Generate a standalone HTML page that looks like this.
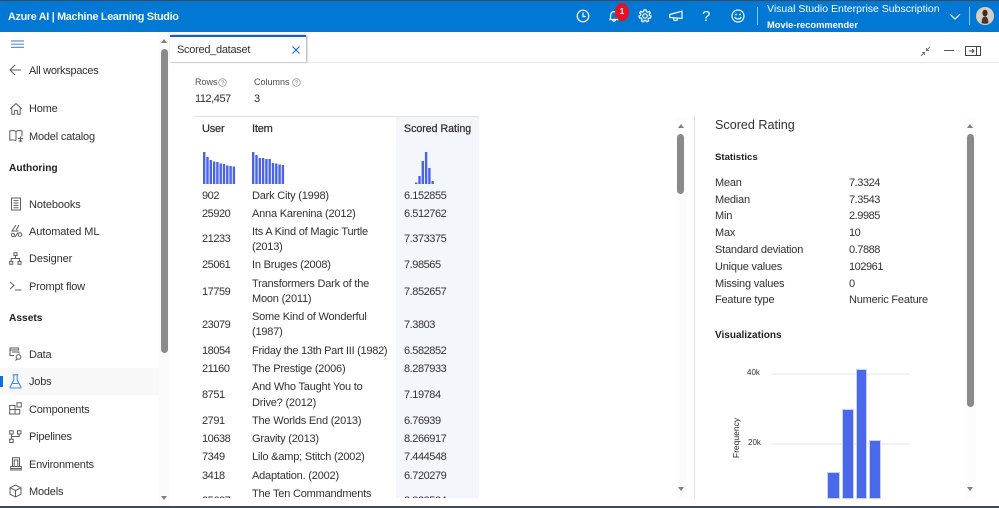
<!DOCTYPE html>
<html><head><meta charset="utf-8">
<style>
html,body{margin:0;padding:0;background:#fff}
body{width:999px;height:508px;position:relative;overflow:hidden;font-family:"Liberation Sans",sans-serif;font-size:11px;color:#3b3a39}
.a{position:absolute}
.t{position:absolute;white-space:nowrap;line-height:16px;height:16px}
.n{font-size:11px;letter-spacing:-.2px;color:#323130;margin-top:1px}
.d{letter-spacing:-.45px}
.z{margin-top:0}
.b{font-weight:bold;color:#201f1e}
svg{position:absolute;overflow:visible}
.s{fill:none;stroke:#5f5e5c;stroke-width:1}
.w{fill:none;stroke:#fff;stroke-width:1.2}
</style></head><body>
<div class="a" style="left:0;top:0;width:999px;height:2px;background:#3b4a5c"></div>
<div class="a" style="left:0;top:1px;width:999px;height:31px;background:#0078d4"></div>
<div class="t" style="left:8px;top:9px;color:#fff;font-size:10.8px;font-weight:bold;opacity:.96;letter-spacing:-.3px">Azure AI | Machine Learning Studio</div>

<svg style="left:576px;top:9px" width="14" height="14" viewBox="0 0 14 14"><circle class="w" cx="7" cy="7" r="5.8"/><path class="w" d="M7 3.5V7.5H10"/></svg>
<svg style="left:607px;top:9px" width="14" height="14" viewBox="0 0 14 14"><path class="w" d="M3 10.5C3.8 9 3.5 7.5 3.7 5.8 4 3.8 5.3 2.6 7 2.6S10 3.8 10.3 5.8C10.5 7.5 10.2 9 11 10.5ZM5.5 10.8C5.7 12.6 8.3 12.6 8.5 10.8"/></svg>
<div class="a" style="left:615px;top:3px;width:14px;height:18px;border-radius:7px/9px;background:#e81123;color:#fff;font-size:8px;font-weight:bold;text-align:center;line-height:18px">1</div>
<svg style="left:638px;top:9px" width="14" height="14" viewBox="0 0 14 14"><circle class="w" cx="7" cy="7" r="2.2"/><path class="w" d="M6 .9H8L8.4 2.6 9.8 3.2 11.3 2.3 12.4 3.9 11.2 5.1 11.4 6.4 13 7 12.6 9 10.9 9 10 10.2 10.6 11.8 8.8 12.8 7.7 11.5H6.3L5.2 12.8 3.4 11.8 4 10.2 3.1 9 1.4 9 1 7 2.6 6.4 2.8 5.1 1.6 3.9 2.7 2.3 4.2 3.2 5.6 2.6Z"/></svg>
<svg style="left:669px;top:10px" width="14" height="12" viewBox="0 0 14 12"><path class="w" d="M.8 4.5 13 1.2V8.5L.8 7.5ZM4.5 8 5 10.3 8 10.5 8.3 8.3"/></svg>
<div class="t" style="left:702px;top:9px;color:#fff;font-size:15px">?</div>
<svg style="left:731px;top:9px" width="14" height="14" viewBox="0 0 14 14"><circle class="w" cx="7" cy="7" r="6"/><circle cx="5" cy="5.5" r=".9" fill="#fff"/><circle cx="9" cy="5.5" r=".9" fill="#fff"/><path class="w" d="M3.8 8C4.8 10.6 9.2 10.6 10.2 8"/></svg>
<div class="a" style="left:757px;top:7px;width:1px;height:18px;background:#8cc4ec"></div>
<div class="t" style="left:767px;top:1px;color:#fff;font-size:10.5px;letter-spacing:0">Visual Studio Enterprise Subscription</div>
<div class="t" style="left:767px;top:17px;color:#fff;font-size:9.3px;font-weight:bold">Movie-recommender</div>
<svg style="left:949px;top:13px" width="12" height="8" viewBox="0 0 12 8"><path class="w" d="M1 1.2 6 6 11 1.2"/></svg>
<div class="a" style="left:969px;top:7px;width:1px;height:18px;background:#8cc4ec"></div>
<svg style="left:976px;top:7px" width="18" height="18" viewBox="0 0 18 18"><circle cx="9" cy="9" r="9" fill="#d6cfc6"/><ellipse cx="9" cy="6" rx="2.6" ry="3.3" fill="#3c2a22"/><path d="M5.6 16C5.8 11 7 9.5 9 9.5S12.2 11 12.4 16Q9 17.6 5.6 16Z" fill="#4a342a"/></svg>

<!-- sidebar -->
<svg style="left:11px;top:40px" width="13" height="9"><path d="M0 1H13M0 4.2H13M0 7.4H13" stroke="#5b93dc" stroke-width="1.2" fill="none"/></svg>
<svg style="left:9px;top:64px" width="13" height="12" viewBox="0 0 13 12"><path class="s" d="M12 6H1M6 1 1 6 6 11"/></svg>
<div class="t n" style="left:29px;top:62px;letter-spacing:-.28px">All workspaces</div>

<svg style="left:9px;top:102px" width="14" height="14" viewBox="0 0 14 14"><path class="s" d="M1.2 6.8 7 1.6 12.8 6.8M2.8 5.6V12.3H5.6V8.4H8.4V12.3H11.2V5.6"/></svg>
<div class="t n z" style="left:29px;top:101px">Home</div>
<svg style="left:9px;top:129px" width="15" height="14" viewBox="0 0 15 14"><path class="s" d="M7 2.5C5.5 1.4 3 1.4 .8 2V11.2C3 10.6 5 10.8 7 11.6M7 2.5C8.5 1.4 11 1.4 13 2V7.5M7 2.5V11.6"/><path d="M9 9.5H14M11.5 7.5V13M9.5 12H13.5" stroke="#5f5e5c" stroke-width="1.1" fill="none"/></svg>
<div class="t n" style="left:29px;top:128px">Model catalog</div>
<div class="t b" style="left:9px;top:161px;font-size:10.2px">Authoring</div>

<svg style="left:10px;top:197px" width="12" height="14" viewBox="0 0 12 14"><path class="s" d="M1.5 1H10.5V13H1.5ZM3.5 3.6H8.5M3.5 6H8.5M3.5 8.4H8.5M3.5 10.8H8.5"/></svg>
<div class="t n" style="left:29px;top:196px;letter-spacing:-.1px">Notebooks</div>
<svg style="left:10px;top:224px" width="13" height="14" viewBox="0 0 13 14"><path class="s" d="M6 1 2 7H8.5M9 1 6.2 6"/><circle class="s" cx="3" cy="11" r="1.6"/><circle class="s" cx="10" cy="10.6" r="1.8"/><path class="s" d="M5 13 8 8.5"/></svg>
<div class="t n" style="left:29px;top:223px;letter-spacing:-.1px">Automated ML</div>
<svg style="left:9px;top:252px" width="13" height="13" viewBox="0 0 13 13"><path class="s" d="M5 .7H8V3.5H5ZM.7 9.5H3.7V12.3H.7ZM9 9.5H12V12.3H9ZM6.5 3.5V6.5M2.2 9.5V6.5H10.5V9.5"/></svg>
<div class="t n z" style="left:29px;top:251px;letter-spacing:-.1px">Designer</div>
<svg style="left:9px;top:281px" width="13" height="10" viewBox="0 0 13 10"><path class="s" d="M1 1 5 4.5 1 8M6 9H12.5"/></svg>
<div class="t n" style="left:29px;top:278px">Prompt flow</div>
<div class="t b" style="left:9px;top:310px;font-size:10.2px;margin-top:1px">Assets</div>

<svg style="left:9px;top:347px" width="14" height="14" viewBox="0 0 14 14"><path class="s" d="M1 1H9.5V3H1ZM1 3V8.5H5M3 5H10V6.5"/><circle class="s" cx="9.5" cy="10" r="2.3"/><path class="s" d="M8 12 6.5 13.5"/></svg>
<div class="t n" style="left:29px;top:346px">Data</div>
<div class="a" style="left:0;top:368px;width:159px;height:27px;background:#f8f8f8"></div>
<div class="a" style="left:0;top:376px;width:3px;height:11px;background:#0f6cdd"></div>
<svg style="left:9px;top:374px" width="13" height="15" viewBox="0 0 13 15"><path d="M3.5 .8H9.5M4.8 1V6L1 13.2Q.8 14 1.6 14H11.4Q12.2 14 12 13.2L8.2 6V1M3 9.5H10" fill="none" stroke="#3f8fd8" stroke-width="1.1"/></svg>
<div class="t n" style="left:29px;top:373px">Jobs</div>
<svg style="left:9px;top:402px" width="13" height="13" viewBox="0 0 13 13"><path class="s" d="M.7 3.5H6V12H.7ZM.7 7.5H10.7V12H6M8 .7H12.3V5H8Z"/></svg>
<div class="t n" style="left:29px;top:401px">Components</div>
<svg style="left:9px;top:430px" width="13" height="13" viewBox="0 0 13 13"><path class="s" d="M.7 .7H4.2V4H.7ZM8.5 .7H12V4H8.5ZM.7 9.2H4.2V12.5H.7ZM2.4 4V9.2M10.2 4V6.5H2.4"/></svg>
<div class="t n" style="left:29px;top:428px">Pipelines</div>
<svg style="left:10px;top:457px" width="12" height="14" viewBox="0 0 12 14"><path class="s" d="M2.5 .7H9.5V9.5H2.5ZM4.2 9.5V3H7.8V9.5M.7 13V9.5H11.3V13ZM.7 11.5H11.3"/></svg>
<div class="t n" style="left:29px;top:456px">Environments</div>
<svg style="left:9px;top:484px" width="13" height="14" viewBox="0 0 13 14"><path class="s" d="M6.5 1 12 3.8V10.2L6.5 13 1 10.2V3.8ZM1 3.8 6.5 6.5 12 3.8M6.5 6.5V13"/></svg>
<div class="t n" style="left:29px;top:483px">Models</div>

<!-- sidebar scrollbar -->
<div class="a" style="left:159px;top:32px;width:11px;height:474px;background:#fbfbfb"></div>
<div class="a" style="left:161px;top:39px;width:0;height:0;border:3px solid transparent;border-bottom:4px solid #808080;border-top:0"></div>
<div class="a" style="left:161px;top:49px;width:7px;height:304px;background:#8a8a8a;border-radius:4px"></div>
<div class="a" style="left:161px;top:496px;width:0;height:0;border:3px solid transparent;border-top:4px solid #808080;border-bottom:0"></div>

<!-- tab -->
<div class="a" style="left:170px;top:62px;width:829px;height:1px;background:#e8e8e8"></div>
<div class="a" style="left:170px;top:35px;width:136px;height:27px;background:#fff;border-top:2px solid #0f5fd6;box-sizing:border-box;box-shadow:1px 0 2px rgba(0,0,0,.35)"></div>
<div class="t n z" style="left:177px;top:42px;font-size:11px;letter-spacing:-.28px">Scored_dataset</div>
<svg style="left:292px;top:46px" width="8" height="8"><path d="M.5 .5 7.5 7.5M7.5 .5 .5 7.5" stroke="#0f6cbd" stroke-width="1.1"/></svg>

<svg style="left:920px;top:46px" width="11" height="11" viewBox="0 0 11 11"><path d="M10 1 6.5 4.5M6.5 2V4.5H9M1 10 4.5 6.5M2 6.5H4.5V9" fill="none" stroke="#8a6f60" stroke-width="1"/></svg>
<div class="a" style="left:944px;top:50px;width:10px;height:1px;background:#555"></div>
<svg style="left:965px;top:46px" width="16" height="10" viewBox="0 0 16 10"><path d="M.5 .5H15.5V9.5H.5ZM11.5 .5V9.5" fill="none" stroke="#444" stroke-width="1"/><path d="M4 5H9M7 3 9 5 7 7" fill="none" stroke="#444" stroke-width="1"/></svg>

<!-- stats header -->
<div class="t" style="left:195px;top:74px;font-size:9px;color:#4f4d4b">Rows</div>
<svg style="left:218px;top:78px" width="9" height="9"><circle cx="4.5" cy="4.5" r="3.8" fill="none" stroke="#a19f9d" stroke-width=".9"/><path d="M3.3 3.5C3.5 2.2 5.7 2.4 5.6 3.6 5.5 4.4 4.5 4.4 4.5 5.3M4.5 6.2V6.9" fill="none" stroke="#a19f9d" stroke-width=".8"/></svg>
<div class="t" style="left:254px;top:74px;font-size:9px;color:#4f4d4b">Columns</div>
<svg style="left:292px;top:78px" width="9" height="9"><circle cx="4.5" cy="4.5" r="3.8" fill="none" stroke="#a19f9d" stroke-width=".9"/><path d="M3.3 3.5C3.5 2.2 5.7 2.4 5.6 3.6 5.5 4.4 4.5 4.4 4.5 5.3M4.5 6.2V6.9" fill="none" stroke="#a19f9d" stroke-width=".8"/></svg>
<div class="t n d" style="left:195px;top:90px">112,457</div>
<div class="t n" style="left:254px;top:90px">3</div>

<!-- table -->
<div class="a" style="left:194px;top:116px;width:285px;height:1px;background:#e1e1e1"></div>
<div class="a" style="left:396px;top:117px;width:83px;height:381px;background:#f3f7fc"></div>
<div class="t n" style="left:202px;top:120px;-webkit-text-stroke:.25px #323130">User</div>
<div class="t n" style="left:252px;top:120px;-webkit-text-stroke:.25px #323130">Item</div>
<div class="t n" style="left:404px;top:120px;-webkit-text-stroke:.25px #323130;font-size:10.6px;letter-spacing:0">Scored Rating</div>

<svg style="left:203px;top:152px" width="34" height="32"><g fill="#4a63e8"><rect x="0" y="0" width="2.4" height="32"/><rect x="3.3" y="5" width="2.4" height="27"/><rect x="6.6" y="8" width="2.4" height="24"/><rect x="9.9" y="9.5" width="2.4" height="22.5"/><rect x="13.2" y="10" width="2.4" height="22"/><rect x="16.5" y="11.5" width="2.4" height="20.5"/><rect x="19.8" y="12" width="2.4" height="20"/><rect x="23.1" y="13.5" width="2.4" height="18.5"/><rect x="26.4" y="14" width="2.4" height="18"/><rect x="29.7" y="14.5" width="2.4" height="17.5"/></g></svg>
<svg style="left:252px;top:152px" width="34" height="32"><g fill="#4a63e8"><rect x="0" y="0" width="2.4" height="32"/><rect x="3.3" y="3" width="2.4" height="29"/><rect x="6.6" y="6" width="2.4" height="26"/><rect x="9.9" y="6" width="2.4" height="26"/><rect x="13.2" y="7" width="2.4" height="25"/><rect x="16.5" y="7" width="2.4" height="25"/><rect x="19.8" y="11" width="2.4" height="21"/><rect x="23.1" y="11.5" width="2.4" height="20.5"/><rect x="26.4" y="12.5" width="2.4" height="19.5"/><rect x="29.7" y="13" width="2.4" height="19"/></g></svg>
<svg style="left:414px;top:152px" width="34" height="32"><g fill="#4a63e8"><rect x="1" y="30.5" width="2.4" height="1.5"/><rect x="4.3" y="24" width="2.4" height="8"/><rect x="7.6" y="9" width="2.4" height="23"/><rect x="10.9" y="0" width="2.4" height="32"/><rect x="14.2" y="16" width="2.4" height="16"/><rect x="17.5" y="29" width="2.4" height="3"/></g></svg>

<div class="a" style="left:194px;top:117px;width:290px;height:381px;overflow:hidden" id="r">
<div class="t n d" style="left:8px;top:70px">902</div><div class="t n" style="left:58px;top:70px">Dark City (1998)</div><div class="t n d" style="left:210px;top:70px">6.152855</div>
<div class="t n d" style="left:8px;top:88px">25920</div><div class="t n" style="left:58px;top:88px">Anna Karenina (2012)</div><div class="t n d" style="left:210px;top:88px">6.512762</div>
<div class="t n d" style="left:8px;top:113px">21233</div><div class="t n" style="left:58px;top:106px">Its A Kind of Magic Turtle</div><div class="t n" style="left:58px;top:121px">(2013)</div><div class="t n d" style="left:210px;top:113px">7.373375</div>
<div class="t n d" style="left:8px;top:139px">25061</div><div class="t n" style="left:58px;top:139px">In Bruges (2008)</div><div class="t n d" style="left:210px;top:139px">7.98565</div>
<div class="t n d" style="left:8px;top:166px">17759</div><div class="t n" style="left:58px;top:158px">Transformers Dark of the</div><div class="t n" style="left:58px;top:173px">Moon (2011)</div><div class="t n d" style="left:210px;top:166px">7.852657</div>
<div class="t n d" style="left:8px;top:199px">23079</div><div class="t n" style="left:58px;top:191px">Some Kind of Wonderful</div><div class="t n" style="left:58px;top:206px">(1987)</div><div class="t n d" style="left:210px;top:199px">7.3803</div>
<div class="t n d" style="left:8px;top:225px">18054</div><div class="t n" style="left:58px;top:225px;letter-spacing:-.27px">Friday the 13th Part III (1982)</div><div class="t n d" style="left:210px;top:225px">6.582852</div>
<div class="t n d" style="left:8px;top:243px">21160</div><div class="t n" style="left:58px;top:243px">The Prestige (2006)</div><div class="t n d" style="left:210px;top:243px">8.287933</div>
<div class="t n d" style="left:8px;top:269px">8751</div><div class="t n" style="left:58px;top:261px">And Who Taught You to</div><div class="t n" style="left:58px;top:277px">Drive? (2012)</div><div class="t n d" style="left:210px;top:269px">7.19784</div>
<div class="t n d" style="left:8px;top:295px">2791</div><div class="t n" style="left:58px;top:295px">The Worlds End (2013)</div><div class="t n d" style="left:210px;top:295px">6.76939</div>
<div class="t n d" style="left:8px;top:313px">10638</div><div class="t n" style="left:58px;top:313px">Gravity (2013)</div><div class="t n d" style="left:210px;top:313px">8.266917</div>
<div class="t n d" style="left:8px;top:331px">7349</div><div class="t n" style="left:58px;top:331px">Lilo &amp;amp; Stitch (2002)</div><div class="t n d" style="left:210px;top:331px">7.444548</div>
<div class="t n d" style="left:8px;top:350px">3418</div><div class="t n" style="left:58px;top:350px">Adaptation. (2002)</div><div class="t n d" style="left:210px;top:350px">6.720279</div>
<div class="t n d" style="left:8px;top:375px">25687</div><div class="t n" style="left:58px;top:368px">The Ten Commandments</div><div class="t n d" style="left:210px;top:375px">8.823584</div>
</div>

<!-- middle scrollbar -->
<div class="a" style="left:676px;top:117px;width:11px;height:381px;background:#fcfcfc"></div>
<div class="a" style="left:678px;top:124px;width:0;height:0;border:3px solid transparent;border-bottom:4px solid #808080;border-top:0"></div>
<div class="a" style="left:677px;top:134px;width:7px;height:60px;background:#8a8a8a;border-radius:4px"></div>
<div class="a" style="left:678px;top:487px;width:0;height:0;border:3px solid transparent;border-top:4px solid #808080;border-bottom:0"></div>

<!-- right panel -->
<div class="a" style="left:694px;top:116px;width:1px;height:382px;background:#e1e1e1"></div>
<div class="t" style="left:715px;top:117px;font-size:12.6px;color:#323130">Scored Rating</div>
<div class="t b" style="left:715px;top:149px;font-size:9.6px;margin-top:1px">Statistics</div>
<div class="t n z" style="left:715px;top:175px">Mean</div><div class="t n z d" style="left:849px;top:175px">7.3324</div>
<div class="t n z" style="left:715px;top:192px">Median</div><div class="t n z d" style="left:849px;top:192px">7.3543</div>
<div class="t n z" style="left:715px;top:208px">Min</div><div class="t n z d" style="left:849px;top:208px">2.9985</div>
<div class="t n z" style="left:715px;top:225px">Max</div><div class="t n z d" style="left:849px;top:225px">10</div>
<div class="t n z" style="left:715px;top:242px">Standard deviation</div><div class="t n z d" style="left:849px;top:242px">0.7888</div>
<div class="t n z" style="left:715px;top:259px">Unique values</div><div class="t n z d" style="left:849px;top:259px">102961</div>
<div class="t n z" style="left:715px;top:276px">Missing values</div><div class="t n z" style="left:849px;top:276px">0</div>
<div class="t n z" style="left:715px;top:292px">Feature type</div><div class="t n z" style="left:849px;top:292px">Numeric Feature</div>
<div class="t b" style="left:715px;top:327px;font-size:10px;margin-top:1px">Visualizations</div>

<!-- chart -->
<div class="a" style="left:771px;top:373px;width:139px;height:2px;background:#f3f2f1"></div>
<div class="a" style="left:771px;top:443px;width:139px;height:2px;background:#f3f2f1"></div>
<div class="t" style="left:747px;top:365px;font-size:8px;color:#323130">40k</div>
<div class="t" style="left:748px;top:435px;font-size:8px;color:#323130">20k</div>
<div class="t" style="left:712px;top:430px;width:48px;text-align:center;font-size:8.5px;color:#201f1e;transform:rotate(-90deg)">Frequency</div>
<div class="a" style="left:828px;top:473px;width:11px;height:25px;background:#4a68ea;box-shadow:0 0 0 1px #c9d2f8"></div>
<div class="a" style="left:843px;top:410px;width:10px;height:88px;background:#4a68ea;box-shadow:0 0 0 1px #c9d2f8"></div>
<div class="a" style="left:857px;top:370px;width:9px;height:128px;background:#4a68ea;box-shadow:0 0 0 1px #c9d2f8"></div>
<div class="a" style="left:870px;top:441px;width:10px;height:57px;background:#4a68ea;box-shadow:0 0 0 1px #c9d2f8"></div>

<!-- right scrollbar -->
<div class="a" style="left:965px;top:117px;width:11px;height:381px;background:#fcfcfc"></div>
<div class="a" style="left:967px;top:124px;width:0;height:0;border:3px solid transparent;border-bottom:4px solid #808080;border-top:0"></div>
<div class="a" style="left:967px;top:134px;width:7px;height:273px;background:#8a8a8a;border-radius:4px"></div>
<div class="a" style="left:967px;top:487px;width:0;height:0;border:3px solid transparent;border-top:4px solid #808080;border-bottom:0"></div>

<div class="a" style="left:0;top:506px;width:999px;height:2px;background:#3b4a5c"></div>
</body></html>
